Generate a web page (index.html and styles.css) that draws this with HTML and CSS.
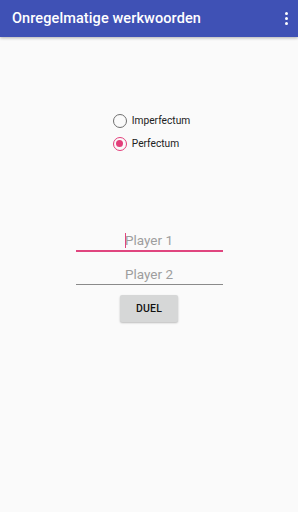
FILE: index.html
```html
<!DOCTYPE html>
<html>
<head>
<meta charset="utf-8">
<link rel="stylesheet" href="styles.css">
</head>
<body>
<header class="appbar">
  <span class="title">Onregelmatige werkwoorden</span>
  <span class="menu"><i></i><i></i><i></i></span>
</header>
<main class="content">
  <div class="radios">
    <label class="radio"><span class="circle"></span><span>Imperfectum</span></label>
    <label class="radio checked"><span class="circle"><span class="dot"></span></span><span>Perfectum</span></label>
  </div>
  <div class="form">
    <div class="field focused"><span class="caret"></span><span class="hint">Player 1</span></div>
    <div class="field"><span class="hint">Player 2</span></div>
    <button class="btn">DUEL</button>
  </div>
</main>
</body>
</html>
```
FILE: styles.css
```css
* { box-sizing: border-box; }
html, body { margin: 0; padding: 0; }
body {
  width: 298px;
  height: 512px;
  background: #fafafa;
  font-family: Roboto, "Noto Sans", sans-serif;
  overflow: hidden;
}
.appbar {
  height: 37px;
  background: #3f51b5;
  display: flex;
  align-items: center;
  justify-content: space-between;
  padding: 0 10px 0 12px;
  box-shadow: 0 1px 3px rgba(0,0,0,0.3);
}
.title {
  color: #fff;
  font-size: 14.5px;
  font-weight: 500;
  letter-spacing: 0.1px;
}
.menu {
  display: flex;
  flex-direction: column;
  gap: 2px;
}
.menu i {
  width: 3px;
  height: 3px;
  background: #fff;
  border-radius: 50%;
}
.content {
  display: flex;
  flex-direction: column;
  align-items: center;
}
.radios {
  margin-top: 75px;
  margin-left: 5px;
  display: flex;
  flex-direction: column;
  gap: 6px;
}
.radio {
  display: flex;
  align-items: center;
  gap: 5px;
  font-size: 10.2px;
  color: #212121;
  height: 17px;
}
.circle {
  width: 14px;
  height: 14px;
  border: 1.6px solid #6f6f6f;
  border-radius: 50%;
  display: flex;
  align-items: center;
  justify-content: center;
}
.checked .circle { border-color: #e33e7a; }
.dot {
  width: 7px;
  height: 7px;
  border-radius: 50%;
  background: #e33e7a;
}
.form {
  margin-top: 73px;
  display: flex;
  flex-direction: column;
  align-items: center;
  width: 147px;
}
.field {
  width: 147px;
  height: 26px;
  border-bottom: 1px solid #8a8a8a;
  display: flex;
  align-items: center;
  justify-content: center;
  position: relative;
  margin-bottom: 7px;
}
.field.focused { border-bottom: 2px solid #e0457f; height: 27px; }
.hint {
  color: #9e9e9e;
  font-size: 13.5px;
  margin-top: 5px;
}
.caret {
  position: absolute;
  left: 49px;
  top: 8px;
  width: 1px;
  height: 15px;
  background: #e0457f;
}
.btn {
  margin-top: 3px;
  width: 58px;
  height: 27px;
  border: none;
  border-radius: 2px;
  background: #d6d7d7;
  box-shadow: 0 1px 2px rgba(0,0,0,0.25);
  font-family: Roboto, sans-serif;
  font-size: 10.5px;
  font-weight: 500;
  color: #111;
  letter-spacing: 0.2px;
  padding: 0;
}
```
